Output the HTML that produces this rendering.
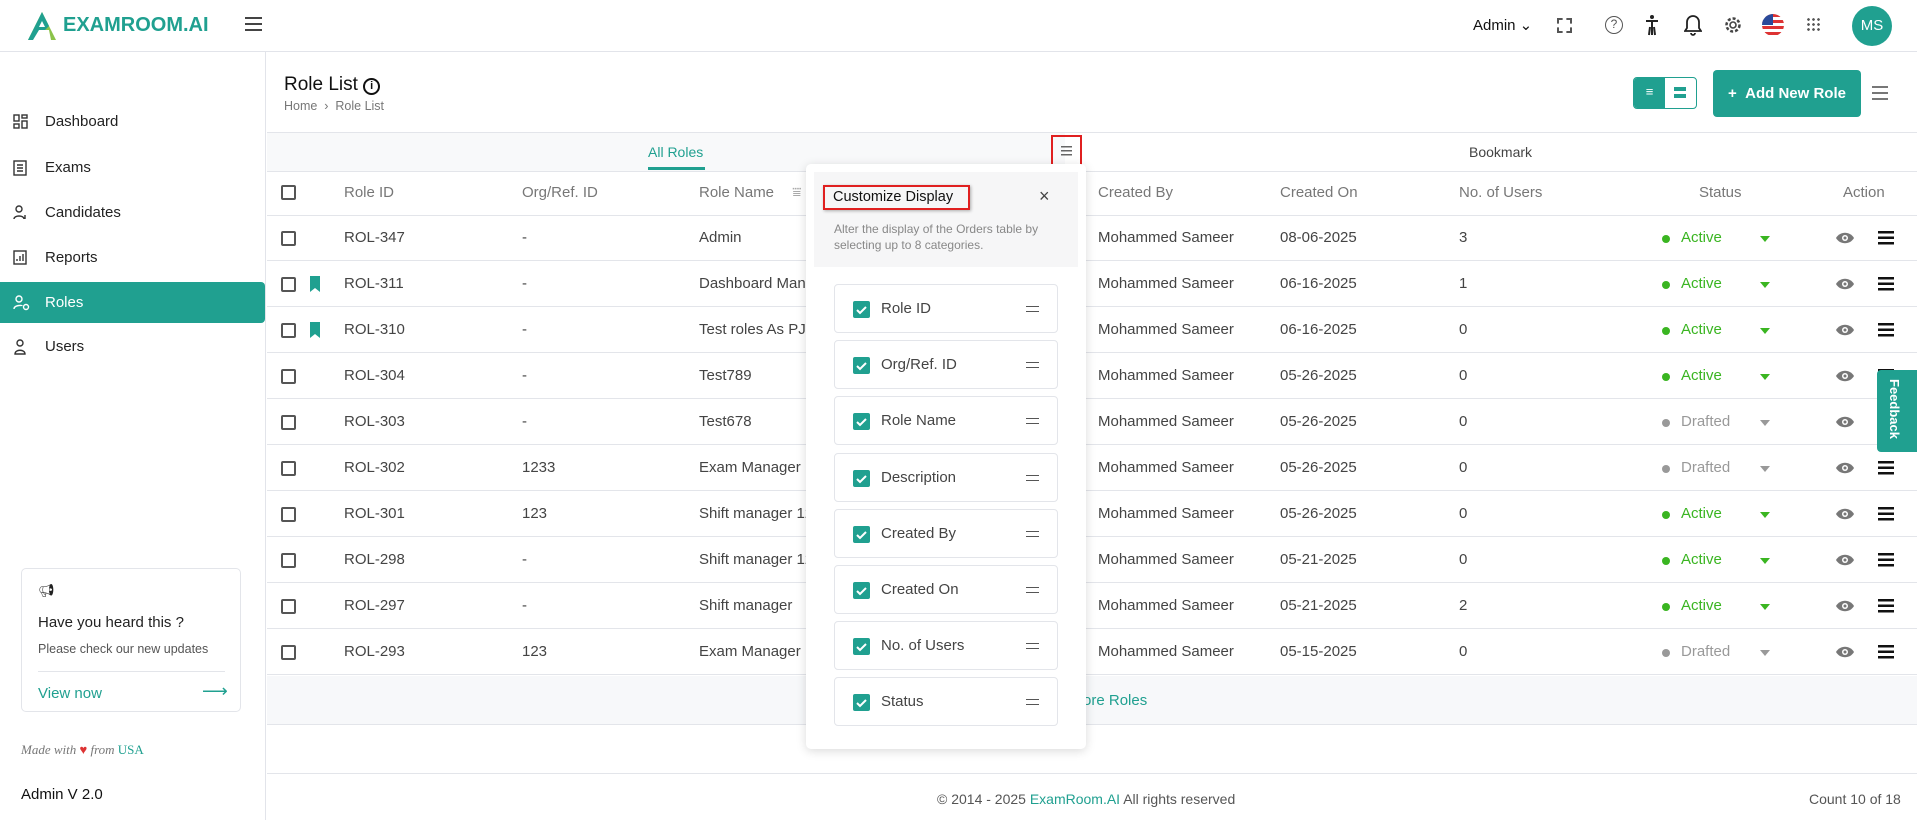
<!DOCTYPE html>
<html><head><meta charset="utf-8"><style>
*{box-sizing:border-box;margin:0;padding:0}
body{width:1917px;height:820px;position:relative;overflow:hidden;background:#fff;font-family:"Liberation Sans",sans-serif;color:#222;font-size:15px}
.a{position:absolute}
.teal{color:#20a090}
.hdr{left:0;top:0;width:1917px;height:52px;border-bottom:1px solid #e2e4ea}
.side{left:0;top:52px;width:266px;height:768px;border-right:1px solid #e2e4ea}
.nav{left:0;width:265px;height:41px;display:flex;align-items:center;padding-left:45px;font-size:15px;color:#222}
.nav svg{position:absolute;left:13px}
.row{left:267px;width:1650px;height:46px;border-bottom:1px solid #e3e5ea}
.cell{position:absolute;top:0;line-height:46px;font-size:15px;color:#444;white-space:nowrap}
.cb{position:absolute;width:15px;height:15px;border:2px solid #555;border-radius:2px}
.th{position:absolute;top:171px;line-height:44px;color:#777;font-size:15px}
.item{left:834px;width:224px;height:49px;border:1px solid #e3e5ea;border-radius:4px;background:#fff}
.item .ck{position:absolute;left:18px;top:16px;width:17px;height:17px;background:#20a090;border-radius:2px}
.item .lb{position:absolute;left:46px;top:0;line-height:47px;color:#444;font-size:15px}
.item .dh{position:absolute;right:18px;top:21px;width:13px;height:6px;border-top:1.5px solid #555;border-bottom:1.5px solid #555}
</style></head><body>
<div class="a hdr">
 <svg class="a" style="left:27px;top:11px" width="30" height="30" viewBox="0 0 30 30"><polygon points="15,1 29,29 1,29" fill="#8bc34a"/><polygon points="15,1 22,15 8,29 1,29" fill="#20a090"/><polygon points="12,19 22,19 24,29 6,29" fill="#fff"/><polygon points="15,10 18,16 12,16" fill="#fff"/></svg>
 <div class="a" style="left:63px;top:14px;font-size:20px;font-weight:bold;color:#20a090">EXAMROOM.AI</div>
 <div class="a" style="left:245px;top:17px;width:17px;height:14px;border-top:2px solid #444;border-bottom:2px solid #444"><div style="margin-top:4px;border-top:2px solid #444"></div></div>
 <div class="a" style="left:1473px;top:16px;font-size:15px;color:#111">Admin ⌄</div>
 <div class="a" style="left:1557px;top:18px;width:15px;height:15px;border:2px dashed #555"></div>
 <div class="a" style="left:1605px;top:16px;width:18px;height:18px;border:1.5px solid #555;border-radius:50%;font-size:12px;text-align:center;line-height:15px;color:#555">?</div>
 <svg class="a" style="left:1644px;top:14px" width="16" height="22" viewBox="0 0 16 22"><circle cx="8" cy="3" r="2" fill="#222"/><path d="M2 7h12M8 7v14M5 21l1-8M11 21l-1-8" stroke="#222" stroke-width="2" fill="none"/></svg>
 <svg class="a" style="left:1684px;top:14px" width="18" height="22" viewBox="0 0 18 22"><path d="M9 2a6 6 0 0 0-6 6v6l-2 3h16l-2-3V8a6 6 0 0 0-6-6zM7 19a2 2 0 0 0 4 0" fill="none" stroke="#222" stroke-width="1.8"/></svg>
 <svg class="a" style="left:1724px;top:16px" width="18" height="18" viewBox="0 0 18 18"><circle cx="9" cy="9" r="3" fill="none" stroke="#444" stroke-width="1.6"/><circle cx="9" cy="9" r="6.5" fill="none" stroke="#444" stroke-width="2.5" stroke-dasharray="3 2"/></svg>
 <div class="a" style="left:1762px;top:14px;width:22px;height:22px;border-radius:50%;overflow:hidden;background:repeating-linear-gradient(#d33 0 3px,#fff 3px 6px)"><div style="width:11px;height:11px;background:#2a4a9a"></div></div>
 <div class="a" style="left:1806px;top:17px;width:14px;height:14px;background:radial-gradient(circle,#555 1.2px,transparent 1.5px) 0 0/5px 5px"></div>
 <div class="a" style="left:1852px;top:6px;width:40px;height:40px;border-radius:50%;background:#20a090;color:#fff;text-align:center;line-height:40px;font-size:15px">MS</div>
</div>
<div class="a side">
 <div class="a nav" style="top:49px"><svg width="15" height="15" viewBox="0 0 15 15" fill="none" stroke="#333" stroke-width="1.4"><rect x="1" y="1" width="5" height="6"/><rect x="9" y="1" width="5" height="3"/><rect x="1" y="10" width="5" height="4"/><rect x="9" y="7" width="5" height="7"/></svg>Dashboard</div>
 <div class="a nav" style="top:95px"><svg width="14" height="16" viewBox="0 0 14 16" fill="none" stroke="#333" stroke-width="1.4"><rect x="1" y="1" width="12" height="14"/><path d="M4 5h6M4 8h6M4 11h6"/></svg>Exams</div>
 <div class="a nav" style="top:140px"><svg width="16" height="15" viewBox="0 0 16 15" fill="none" stroke="#333" stroke-width="1.4"><circle cx="6" cy="4" r="3"/><path d="M1 14c0-4 10-4 10 0M12 10v4"/></svg>Candidates</div>
 <div class="a nav" style="top:185px"><svg width="14" height="15" viewBox="0 0 14 15" fill="none" stroke="#333" stroke-width="1.4"><rect x="1" y="1" width="12" height="13"/><path d="M4 11V9M7 11V6M10 11V4"/></svg>Reports</div>
 <div class="a nav" style="top:230px;background:#20a090;color:#fff;border-radius:0 4px 4px 0"><svg width="18" height="16" viewBox="0 0 18 16" fill="none" stroke="#fff" stroke-width="1.4"><circle cx="6" cy="4" r="3"/><path d="M1 14c0-4 8-4 8-3"/><circle cx="13" cy="12" r="2.5"/></svg>Roles</div>
 <div class="a nav" style="top:274px"><svg width="14" height="16" viewBox="0 0 14 16" fill="none" stroke="#333" stroke-width="1.4"><circle cx="7" cy="4" r="3"/><path d="M2 15c0-5 10-5 10 0z"/></svg>Users</div>
 <div class="a" style="left:21px;top:516px;width:220px;height:144px;border:1px solid #e3e5ea;border-radius:5px">
  <div class="a" style="left:16px;top:14px;font-size:13px;color:#222">📢︎</div>
  <div class="a" style="left:16px;top:45px;font-size:15px;color:#222">Have you heard this ?</div>
  <div class="a" style="left:16px;top:73px;font-size:12.5px;color:#555">Please check our new updates</div>
  <div class="a" style="left:16px;top:102px;width:187px;border-top:1px solid #e3e5ea"></div>
  <div class="a teal" style="left:16px;top:116px;font-size:15px">View now</div>
  <div class="a teal" style="left:180px;top:112px;font-size:18px">⟶</div>
 </div>
 <div class="a" style="left:21px;top:690px;font-family:'Liberation Serif',serif;font-style:italic;font-size:13px;color:#777">Made with <span style="color:#d33">♥</span> from <span class="teal" style="font-style:normal">USA</span></div>
 <div class="a" style="left:21px;top:734px;font-size:15px;color:#111">Admin V 2.0</div>
</div>
<div class="a" style="left:284px;top:74px;font-size:19px;color:#111">Role List <span style="display:inline-block;width:17px;height:17px;border:2px solid #111;border-radius:50%;font-size:11px;text-align:center;line-height:13px;font-weight:bold;vertical-align:1px">i</span></div>
<div class="a" style="left:284px;top:99px;font-size:12.5px;color:#777">Home &nbsp;›&nbsp; Role List</div>
<div class="a" style="left:1633px;top:77px;width:64px;height:32px;border:1.5px solid #20a090;border-radius:4px;overflow:hidden"><div style="width:31px;height:100%;background:#20a090;color:#fff;text-align:center;line-height:28px;font-size:13px">≡</div><div class="a" style="left:40px;top:9px;width:12px;height:11px;border-top:4px solid #20a090;border-bottom:4px solid #20a090"></div></div>
<div class="a" style="left:1713px;top:70px;width:148px;height:47px;background:#20a090;border-radius:4px;color:#fff;font-size:15px;font-weight:bold;line-height:47px;text-align:center">+&nbsp;&nbsp;Add New Role</div>
<div class="a" style="left:1872px;top:86px;width:16px;height:14px;background:repeating-linear-gradient(#777 0 2px,transparent 2px 6px)"></div>
<div class="a" style="left:267px;top:132px;width:1650px;height:40px;border-top:1px solid #e3e5ea;border-bottom:1px solid #e3e5ea"></div>
<div class="a" style="left:267px;top:133px;width:798px;height:38px;background:#f8f9fa"></div>
<div class="a teal" style="left:648px;top:144px;font-size:14px">All Roles</div>
<div class="a" style="left:648px;top:167px;width:57px;height:3px;background:#20a090"></div>
<div class="a" style="left:1469px;top:144px;font-size:14px;color:#444">Bookmark</div>
<div class="a" style="left:1051px;top:135px;width:31px;height:32px;border:2px solid #e02020"><div style="margin:9px auto 0;width:11px;height:11px;background:repeating-linear-gradient(#666 0 1.5px,transparent 1.5px 4px)"></div></div>
<div class="a" style="left:267px;top:215px;width:1650px;border-top:1px solid #e3e5ea"></div>
<div class="cb" style="left:281px;top:185px"></div>
<div class="th" style="left:344px">Role ID</div><div class="th" style="left:522px">Org/Ref. ID</div><div class="th" style="left:699px">Role Name <span style="color:#aaa;margin-left:14px">⩸</span></div><div class="th" style="left:1098px">Created By</div><div class="th" style="left:1280px">Created On</div><div class="th" style="left:1459px">No. of Users</div><div class="th" style="left:1699px">Status</div><div class="th" style="left:1843px">Action</div>

<div id="rows"></div>
<script>
var d=[["ROL-347","-","Admin","08-06-2025","3",1,0],["ROL-311","-","Dashboard Mana","06-16-2025","1",1,1],["ROL-310","-","Test roles As PJ","06-16-2025","0",1,1],["ROL-304","-","Test789","05-26-2025","0",1,0],["ROL-303","-","Test678","05-26-2025","0",0,0],["ROL-302","1233","Exam Manager 1","05-26-2025","0",0,0],["ROL-301","123","Shift manager 12","05-26-2025","0",1,0],["ROL-298","-","Shift manager 12","05-21-2025","0",1,0],["ROL-297","-","Shift manager","05-21-2025","2",1,0],["ROL-293","123","Exam Manager","05-15-2025","0",0,0]];
var h="";d.forEach(function(r,i){var t=215+i*46;var c=r[5]?"#3ab521":"#999";h+='<div class="a row" style="top:'+t+'px"><div class="cb" style="left:14px;top:16px"></div>'+(r[6]?'<svg class="a" style="left:42px;top:15px" width="12" height="16"><path d="M1 0h10v16l-5-4-5 4z" fill="#20a090"/></svg>':'')+'<div class="cell" style="left:77px">'+r[0]+'</div><div class="cell" style="left:255px">'+r[1]+'</div><div class="cell" style="left:432px">'+r[2]+'</div><div class="cell" style="left:831px">Mohammed Sameer</div><div class="cell" style="left:1013px">'+r[3]+'</div><div class="cell" style="left:1192px">'+r[4]+'</div><div class="a" style="left:1395px;top:20px;width:8px;height:8px;border-radius:50%;background:'+c+'"></div><div class="cell" style="left:1414px;color:'+c+'">'+(r[5]?"Active":"Drafted")+'</div><div class="a" style="left:1493px;top:21px;border:5px solid transparent;border-top:6px solid '+c+'"></div><svg class="a" style="left:1568px;top:16px" width="20" height="14"><path d="M1 7C5 0 15 0 19 7 15 14 5 14 1 7z" fill="#777"/><circle cx="10" cy="7" r="3" fill="#fff"/><circle cx="10" cy="7" r="1.5" fill="#777"/></svg><div class="a" style="left:1611px;top:16px;width:16px;height:14px;background:repeating-linear-gradient(#111 0 2.5px,transparent 2.5px 5.5px)"></div></div>'});
document.getElementById("rows").innerHTML=h;
</script>
<div class="a" style="left:267px;top:676px;width:1650px;height:49px;background:#f7f8fa;border-bottom:1px solid #e3e5ea"></div>
<div class="a teal" style="left:1033px;top:692px;font-size:15px">Load More Roles</div>
<div class="a" style="left:267px;top:773px;width:1650px;border-top:1px solid #e3e5ea"></div>
<div class="a" style="left:937px;top:791px;font-size:14px;color:#555">© 2014 - 2025 <span class="teal">ExamRoom.AI</span> All rights reserved</div>
<div class="a" style="left:1809px;top:791px;font-size:14px;color:#555">Count 10 of 18</div>
<div class="a" style="left:1877px;top:370px;width:40px;height:82px;background:#20a090;border-radius:4px 0 0 4px"><div style="position:absolute;left:10px;top:9px;writing-mode:vertical-rl;color:#fff;font-weight:bold;font-size:13px">Feedback</div></div>

<div class="a" style="left:806px;top:164px;width:280px;height:585px;background:#fff;border-radius:5px;box-shadow:0 2px 10px rgba(0,0,0,.15)">
 <div class="a" style="left:8px;top:8px;width:264px;height:95px;background:#f6f6f7"></div>
 <div class="a" style="left:17px;top:21px;width:147px;height:25px;border:2px solid #e02020;box-shadow:1px 1px 3px rgba(0,0,0,.3);font-size:14.5px;color:#111;padding-left:8px;line-height:21px">Customize Display</div>
 <div class="a" style="left:233px;top:22px;font-size:18px;color:#444">×</div>
 <div class="a" style="left:28px;top:57px;width:240px;font-size:12px;line-height:16px;color:#888">Alter the display of the Orders table by selecting up to 8 categories.</div>
</div>
<div id="items"></div>
<script>
var n=["Role ID","Org/Ref. ID","Role Name","Description","Created By","Created On","No. of Users","Status"],s="";
n.forEach(function(x,i){s+='<div class="a item" style="top:'+(284+i*56.2)+'px"><div class="ck"><svg width="17" height="17"><path d="M4 9l3 3 6-6" fill="none" stroke="#fff" stroke-width="2"/></svg></div><div class="lb">'+x+'</div><div class="dh"></div></div>'});
document.getElementById("items").innerHTML=s;
</script>
</body></html>
